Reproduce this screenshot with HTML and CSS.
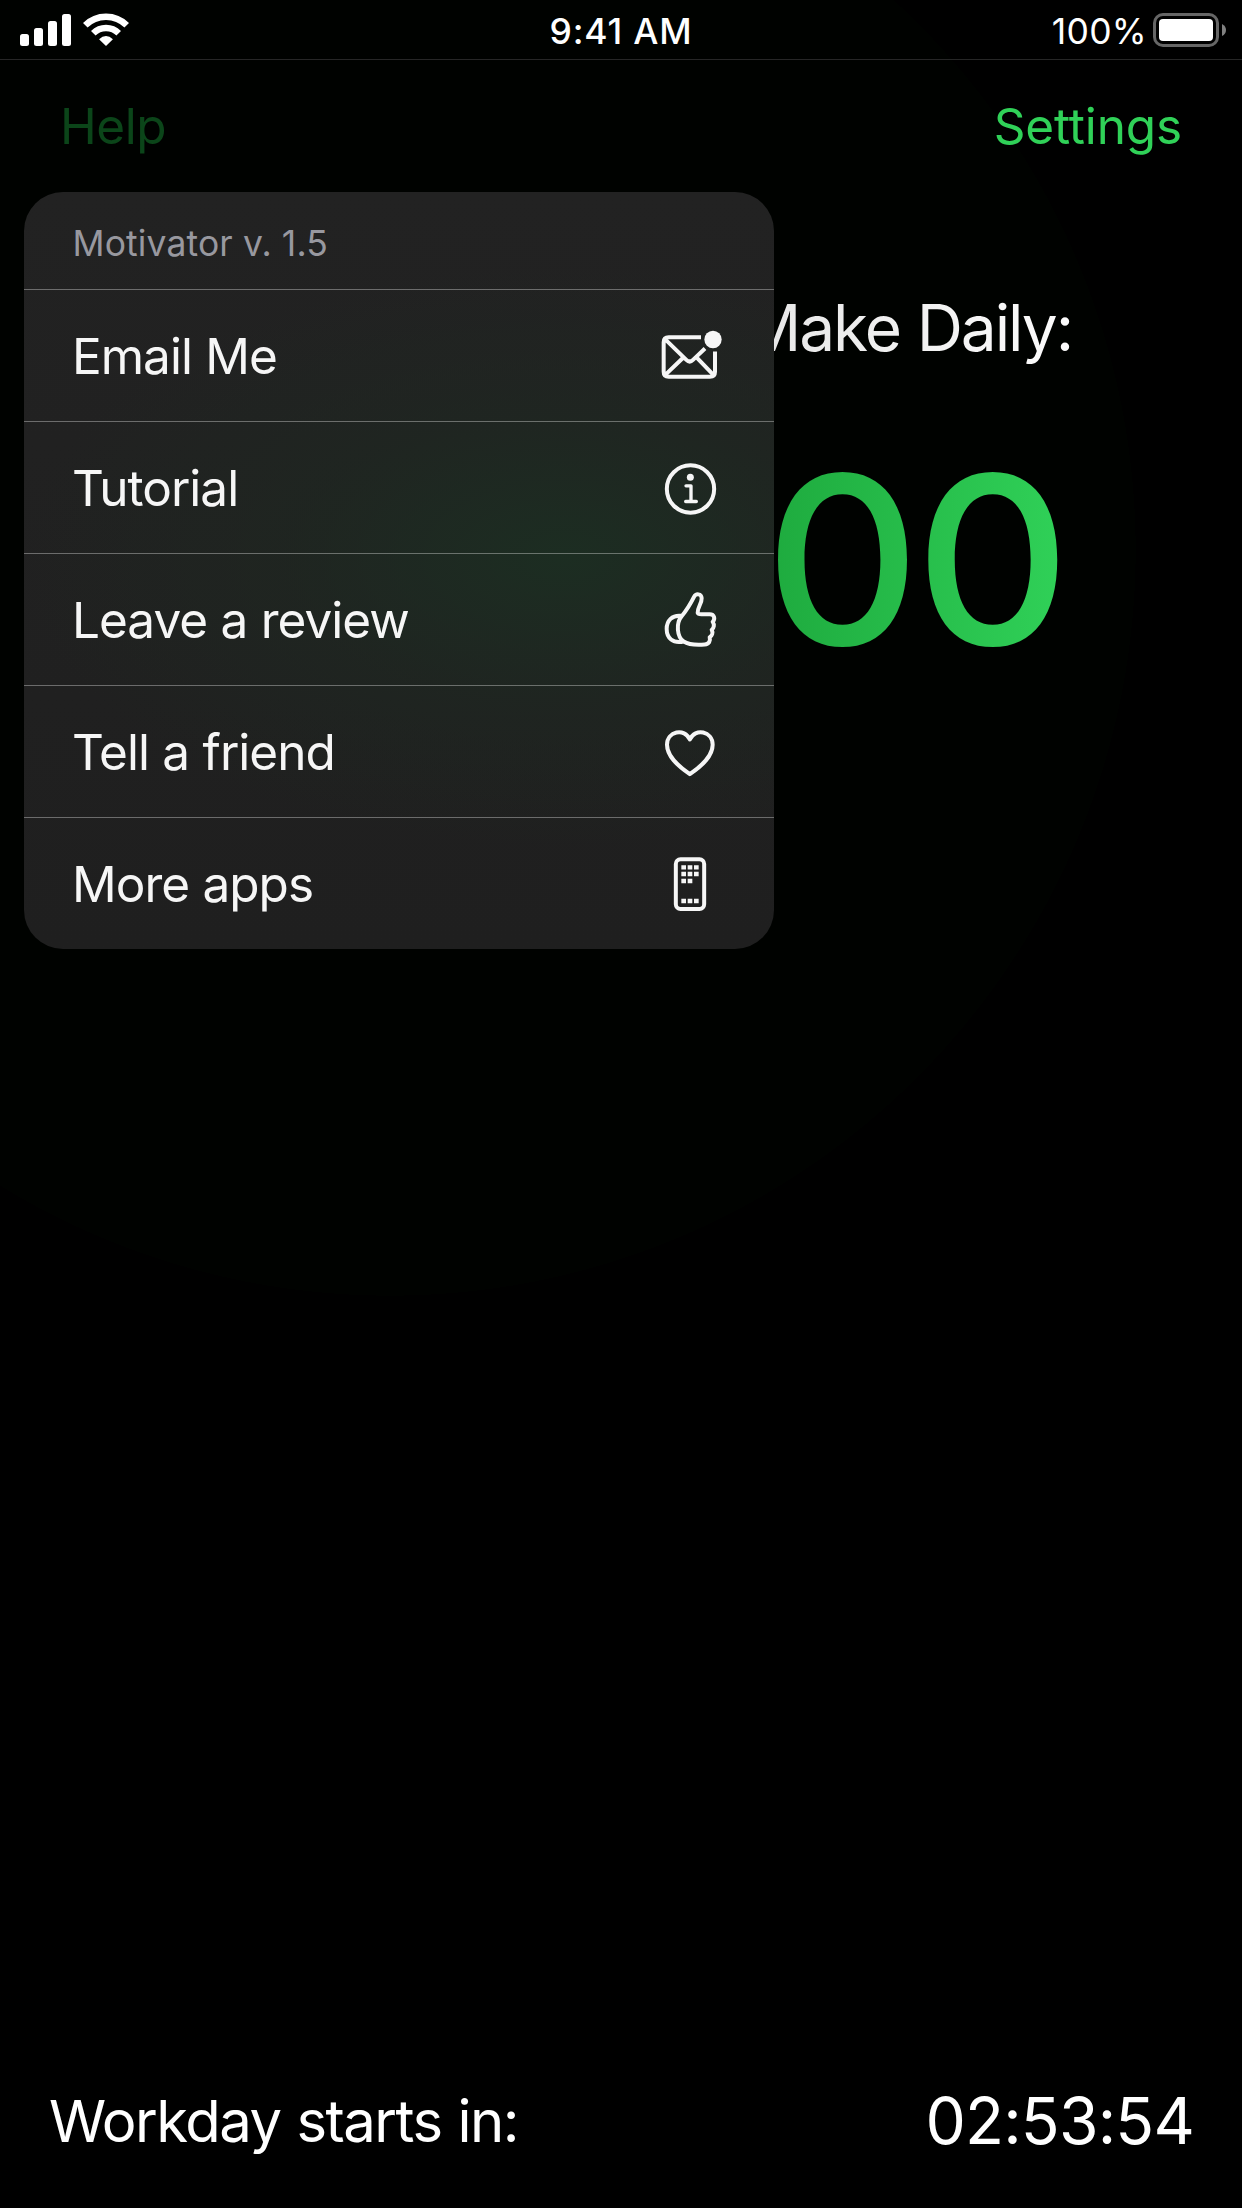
FILE: index.html
```html
<!DOCTYPE html>
<html lang="en">
<head>
<meta charset="utf-8">
<title>Motivator</title>
<link rel="stylesheet" href="styles.css">
</head>
<body>
<div class="screen">
  <header class="status">
    <div class="status-left">
      <svg class="signal" viewBox="0 0 51 32"><rect x="0" y="20" width="9" height="12" rx="2.5"/><rect x="14" y="14" width="9" height="18" rx="2.5"/><rect x="28" y="7" width="9" height="25" rx="2.5"/><rect x="42" y="0" width="9" height="32" rx="2.5"/></svg>
      <svg class="wifi" viewBox="0 0 46 33"><path class="arc" d="M2.3 12.3A29.3 29.3 0 0 1 43.7 12.3M10.3 20.3A18 18 0 0 1 35.7 20.3"/><path d="M23 33L16.3 26.6Q16 26.2 16.4 25.9Q19.3 23 23 23Q26.7 23 29.6 25.9Q30 26.2 29.7 26.6Z"/></svg>
    </div>
    <div class="time">9:41 AM</div>
    <div class="status-right">
      <span class="percent">100%</span>
      <svg class="battery" viewBox="0 0 74 34"><rect class="shell" x="1.5" y="1.5" width="63" height="31" rx="8.5"/><rect x="6" y="6" width="54" height="22" rx="4"/><path class="nub" d="M69 11Q73 13 73 17Q73 21 69 23Z"/></svg>
    </div>
  </header>
  <nav class="nav">
    <span class="help">Help</span>
    <span class="settings">Settings</span>
  </nav>
  <main class="summary">
    <h1 class="title">Make Daily:</h1>
    <div class="amount">00</div>
  </main>
  <footer class="footer">
    <span class="label">Workday starts in:</span>
    <span class="clock">02:53:54</span>
  </footer>
  <section class="menu">
    <div class="menu-head">Motivator v. 1.5</div>
    <div class="item"><span>Email Me</span>
      <svg class="icon" viewBox="60 40.5 192 192"><path d="M183 80H86Q71 80 71 95V184Q71 199 86 199H210Q225 199 225 184V123M75 86L139 148Q149 158 159 148L195 114M75 194L127 144M221 194L171 142"/><circle class="fill" cx="219" cy="87" r="26"/></svg></div>
    <div class="item"><span>Tutorial</span>
      <svg class="icon" viewBox="60 436.5 192 192"><circle cx="151.5" cy="535.5" r="71"/><circle class="fill" cx="151" cy="500" r="10.5"/><path class="thin" d="M138 526H153V573M137 573H169"/></svg></div>
    <div class="item"><span>Leave a review</span>
      <svg class="icon" viewBox="60 52.5 192 192"><path d="M125 137C140 119 153 97 162 79C168 68 184 69 185 83C186 98 172 111 173 127C174 131 178 131 184 131H209C224 131 226 146 218 154C224 162 222 173 215 178C220 187 216 196 209 200C212 211 207 221 194 222C169 224 145 222 131 213C111 200 107 158 125 137M125 136C96 132 80 151 80 175C80 203 98 220 131 213"/></svg></div>
    <div class="item"><span>Tell a friend</span>
      <svg class="icon" viewBox="60 448.5 192 192"><path d="M149.500 611C112 585 81 557 81 523C81 482 134 471 149.500 507C165 471 218 482 218 523C218 557 187 585 149.500 611Z"/></svg></div>
    <div class="item"><span>More apps</span>
      <svg class="icon" viewBox="60 844.5 192 192"><rect x="107.500" y="866.500" width="85" height="149" rx="14"/><path class="fill" d="M124 884h14v13h-14zM143 884h14v13h-14zM162 884h14v13h-14zM124 904h14v13h-14zM143 904h14v13h-14zM162 904h14v13h-14zM124 925h14v13h-14zM143 925h14v13h-14zM124 985h14v13h-14zM143 985h14v13h-14zM162 985h14v13h-14z"/></svg></div>
  </section>
</div>
</body>
</html>
```
FILE: styles.css
```css
* { box-sizing: border-box; }
body {
  margin: 0;
  background: #000;
  color: #fff;
  font-family: Inter, "Liberation Sans", sans-serif;
}
.screen {
  position: relative;
  display: flex;
  flex-direction: column;
  width: 1242px;
  height: 2208px;
  overflow: hidden;
  white-space: nowrap;
  background: radial-gradient(circle at 390px 550px, #000200 40%, #000 720px);
}
.status {
  display: grid;
  grid-template-columns: 1fr auto 1fr;
  height: 60px;
  border-bottom: 1px solid #262626;
}
.status svg { display: block; fill: #fff; }
.status-left {
  display: flex;
  align-items: flex-start;
  gap: 12px;
  padding: 13px 0 0 20px;
}
.signal { width: 51px; height: 32px; margin-top: 1px; }
.wifi { width: 46px; height: 33px; }
.wifi .arc { fill: none; stroke: #fff; stroke-width: 6.5; }
.time {
  font-size: 35.5px;
  font-weight: 550;
  line-height: 63px;
  letter-spacing: .8px;
}
.status-right {
  display: flex;
  justify-content: flex-end;
  align-items: flex-start;
  gap: 6px;
  padding-right: 15px;
}
.percent { font-size: 35.5px; line-height: 63px; letter-spacing: .3px; }
.battery { width: 74px; height: 34px; margin-top: 13px; }
.battery .shell { fill: none; stroke: #666; stroke-width: 3; }
.battery .nub { fill: #808080; }
.nav {
  display: flex;
  justify-content: space-between;
  align-items: center;
  height: 132px;
  padding: 0 60px;
  font-size: 49.5px;
}
.help { color: #0b4519; letter-spacing: -.5px; }
.settings { color: #30d158; letter-spacing: -.15px; }
.summary {
  display: flex;
  flex-direction: column;
  align-items: flex-end;
}
.title {
  margin: 0;
  padding-right: 170px;
  font-size: 64px;
  font-weight: 400;
  line-height: 272px;
  letter-spacing: -2.1px;
  word-spacing: 1px;
  color: transparent;
  background: linear-gradient(90deg, #e6e6e6, #fff 75%);
  background-clip: text;
}
.amount {
  margin-right: 176px;
  font-size: 235px;
  font-weight: 500;
  line-height: 191px;
  letter-spacing: -4.9px;
  color: transparent;
  background: linear-gradient(90deg, #1eaa3e, #30d158);
  background-clip: text;
  transform: scaleX(1.025);
  transform-origin: right;
}
.footer {
  display: flex;
  justify-content: space-between;
  align-items: center;
  height: 175px;
  margin-top: auto;
  padding: 0 48px 0 49px;
}
.label {
  padding-top: 1px;
  font-size: 58px;
  letter-spacing: -1.5px;
  word-spacing: 1px;
}
.clock { font-size: 64px; letter-spacing: -.8px; }
.menu {
  position: absolute;
  left: 24px;
  top: 192px;
  width: 750px;
  height: 757px;
  overflow: hidden;
  border-radius: 39px;
  color: #f6f6f6;
  background:
    radial-gradient(ellipse 540px 290px at 540px 365px, rgba(28, 46, 34, .95), rgba(30, 40, 33, .6) 50%, transparent),
    linear-gradient(#222, #1f1f1f);
}
.menu-head {
  height: 97px;
  padding: 6px 0 0 48.5px;
  font-size: 35.5px;
  line-height: 92px;
  letter-spacing: .12px;
  color: #98989f;
}
.item {
  display: flex;
  justify-content: space-between;
  align-items: center;
  height: 132px;
  padding: 0 50px 0 48px;
  border-top: 1px solid rgba(255, 255, 255, .34);
  font-size: 49.5px;
  letter-spacing: -1px;
  word-spacing: .5px;
}
.icon {
  width: 64px;
  height: 64px;
  fill: none;
  stroke: #f6f6f6;
  stroke-width: 12;
  stroke-linejoin: round;
}
.icon .fill { fill: #f6f6f6; stroke: none; }
.icon .thin { stroke-width: 10; stroke-linecap: round; }
```
